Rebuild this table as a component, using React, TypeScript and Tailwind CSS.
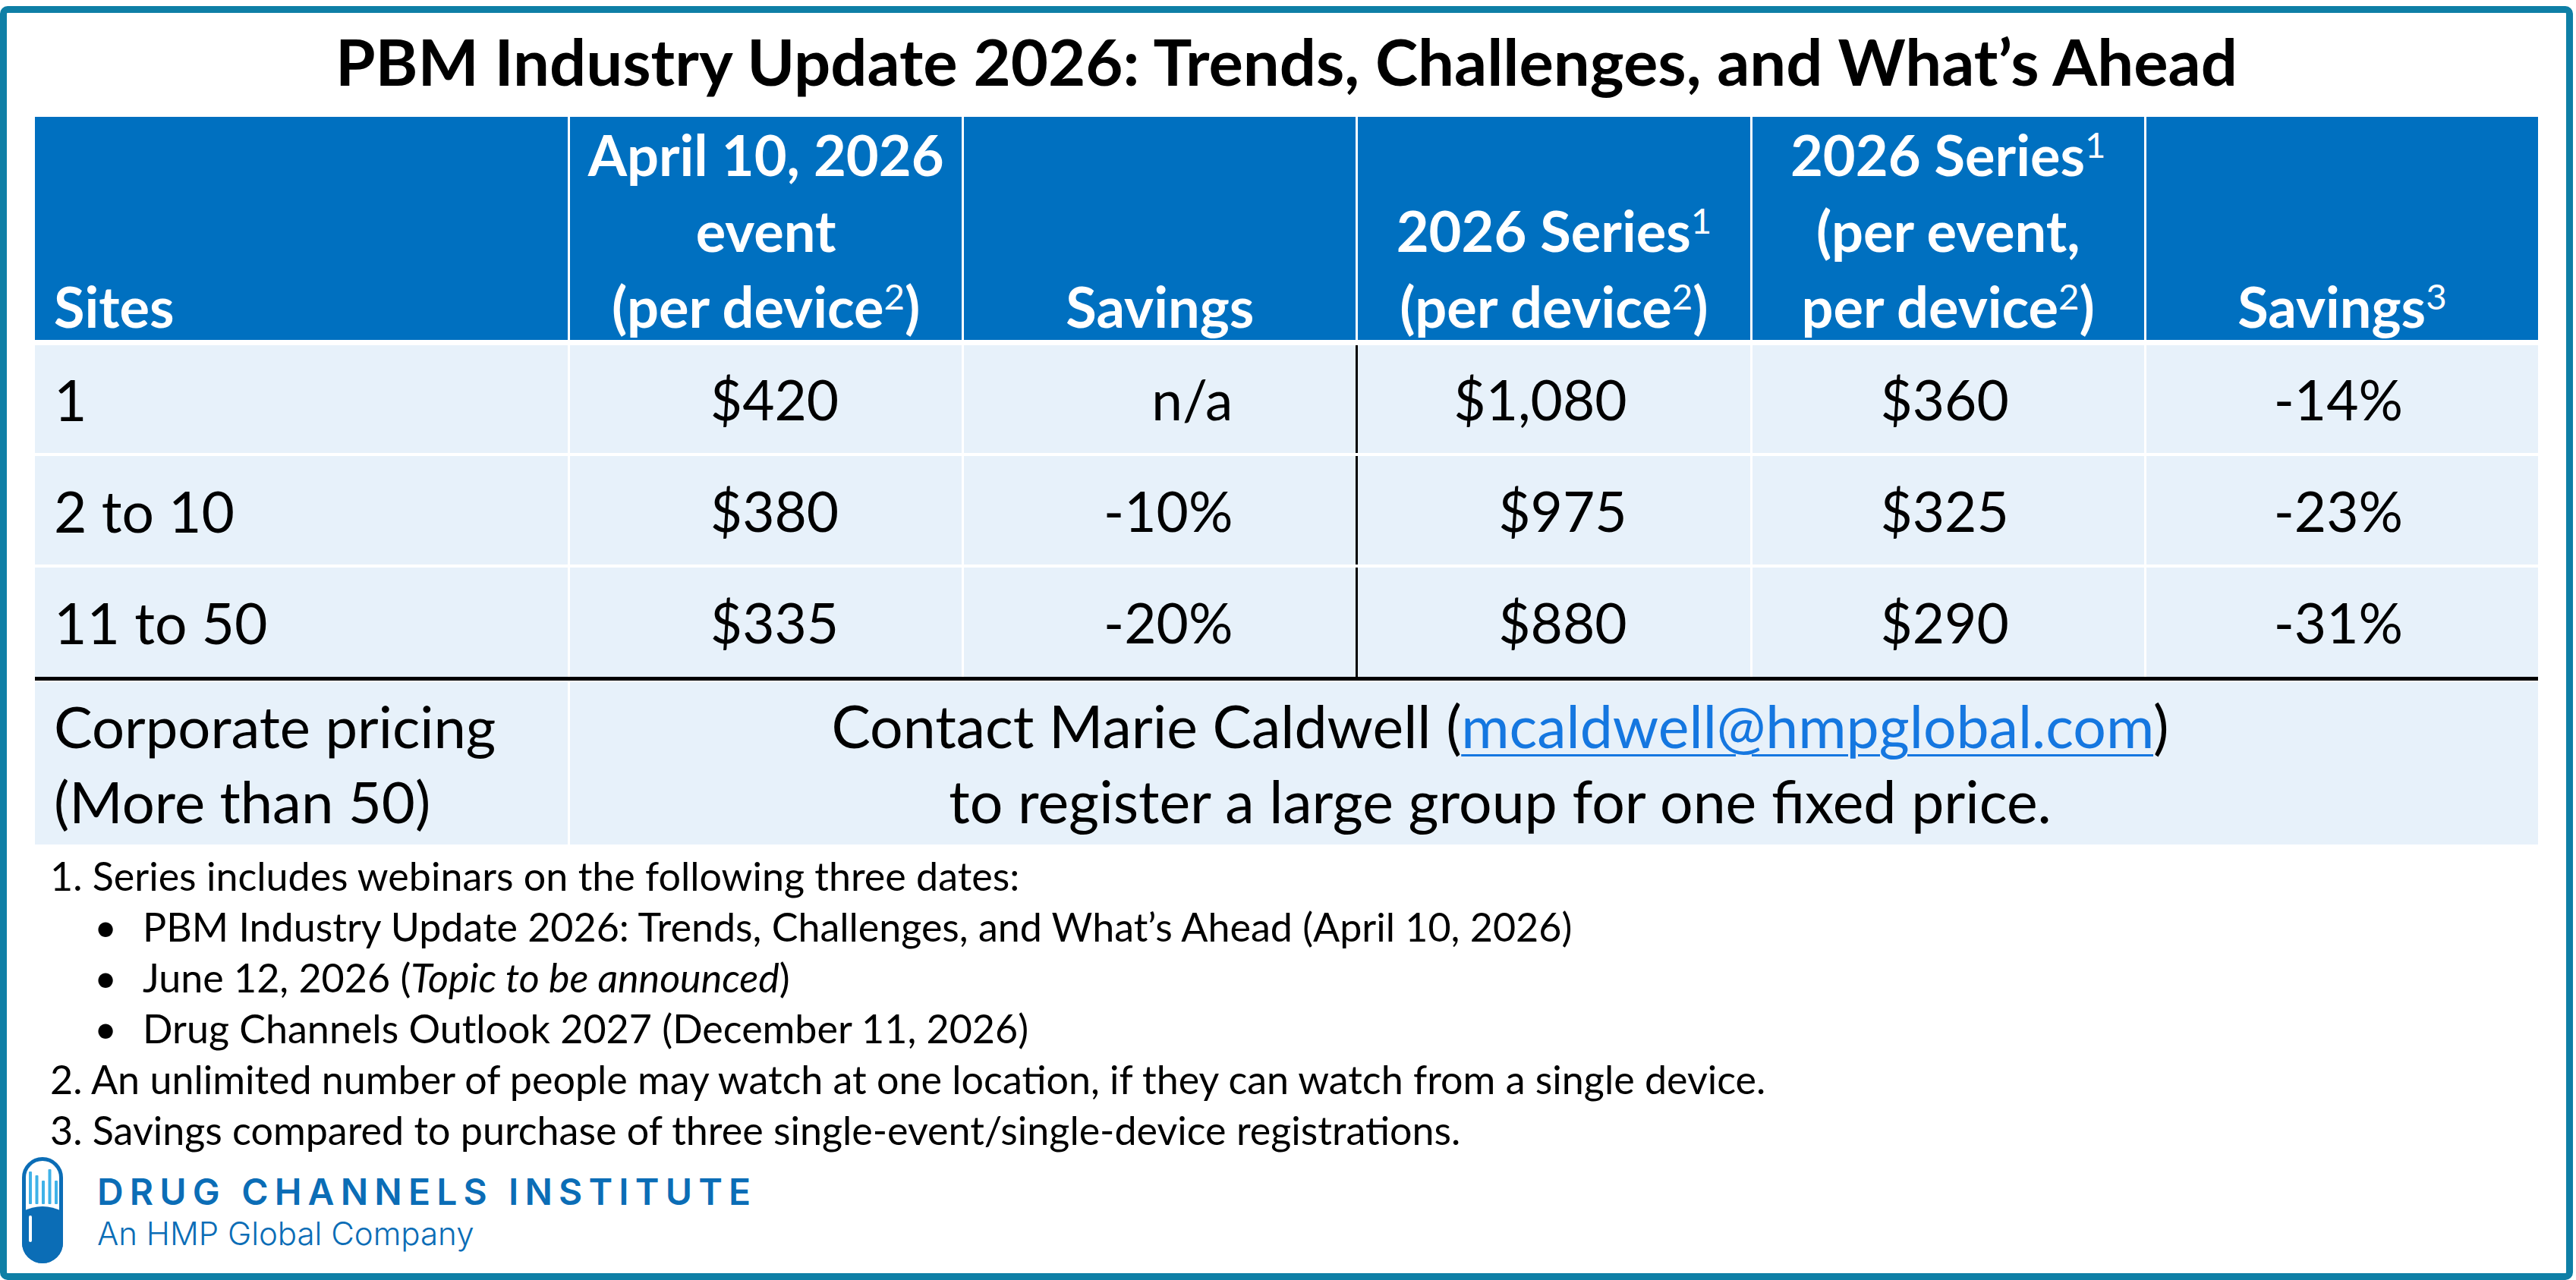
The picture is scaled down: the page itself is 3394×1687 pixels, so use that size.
import React from 'react'

type Row = { sites: string; event: string; eventSavings: string; series: string; perEvent: string; savings: string }

const ROWS: Row[] = [
  { sites: '1', event: '$420', eventSavings: 'n/a', series: '$1,080', perEvent: '$360', savings: '-14%' },
  { sites: '2 to 10', event: '$380', eventSavings: '-10%', series: '$975', perEvent: '$325', savings: '-23%' },
  { sites: '11 to 50', event: '$335', eventSavings: '-20%', series: '$880', perEvent: '$290', savings: '-31%' },
]

const ROW_HEIGHTS = ['h-[142px]', 'h-[143px] mt-[4px]', 'h-[144px] mt-[4px]']

function Sup({ children }: { children: React.ReactNode }) {
  return <sup className="text-[0.64em] font-normal">{children}</sup>
}

function HeaderCell({ children, left }: { children: React.ReactNode; left?: boolean }) {
  return (
    <div className={left ? 'flex items-end bg-[#0070c0] pl-[25px]' : 'flex items-end justify-center bg-[#0070c0]'}>
      <div className={left ? 'mb-[-6px] text-left' : 'mb-[-6px] text-center'}>{children}</div>
    </div>
  )
}

function Bullet({ children }: { children: React.ReactNode }) {
  return (
    <li className="flex">
      <span className="w-[122px] shrink-0 pl-[58px]">•</span>
      <span>{children}</span>
    </li>
  )
}

function PillLogo() {
  return (
    <svg width="54" height="140" viewBox="0 0 54 140" className="shrink-0">
      <defs>
        <clipPath id="pill">
          <rect x="0" y="0" width="54" height="140" rx="27" />
        </clipPath>
      </defs>
      <rect x="2.5" y="2.5" width="49" height="135" rx="24.5" fill="#fff" stroke="#0b6db6" strokeWidth="5" />
      <path d="M0 72 Q27 58 54 72 L54 140 L0 140 Z" fill="#0b6db6" clipPath="url(#pill)" />
      <rect x="9" y="19" width="4" height="43" rx="1" fill="#3fb2e8" />
      <rect x="17.5" y="24" width="4" height="38" rx="1" fill="#3fb2e8" />
      <rect x="26" y="31" width="4" height="31" rx="1" fill="#3fb2e8" />
      <rect x="34.5" y="16" width="4" height="46" rx="1" fill="#3fb2e8" />
      <rect x="43" y="31" width="4" height="31" rx="1" fill="#3fb2e8" />
      <rect x="9" y="77" width="4" height="35" rx="2" fill="#fff" />
    </svg>
  )
}

export default function App() {
  return (
    <div className="h-[1687px] w-[3394px] overflow-hidden bg-white pt-[8px] font-[Lato,sans-serif] text-black">
      <div className="h-[1679px] w-[3390px] rounded-[10px] border-[9px] border-[#0e7fa6]">
        <h1 className="h-[137px] pt-[15px] text-center text-[85px] font-bold leading-[97px]">
          PBM Industry Update 2026: Trends, Challenges, and What’s Ahead
        </h1>

        <div className="ml-[37px] w-[3298px]">
          <div className="grid h-[288px] grid-cols-[702px_repeat(5,1fr)] gap-x-[3px] text-[74px] font-bold leading-[100px] text-white">
            <HeaderCell left>Sites</HeaderCell>
            <HeaderCell>
              April 10, 2026
              <br />
              event
              <br />
              (per device<Sup>2</Sup>)
            </HeaderCell>
            <HeaderCell>Savings</HeaderCell>
            <HeaderCell>
              2026 Series<Sup>1</Sup>
              <br />
              (per device<Sup>2</Sup>)
            </HeaderCell>
            <HeaderCell>
              2026 Series<Sup>1</Sup>
              <br />
              (per event,
              <br />
              per device<Sup>2</Sup>)
            </HeaderCell>
            <HeaderCell>
              Savings<Sup>3</Sup>
            </HeaderCell>
          </div>

          <div className="mt-[13px] text-[73px] leading-[88px]">
            {ROWS.map((row, i) => (
              <div key={row.sites} className={`grid grid-cols-[702px_repeat(5,1fr)] gap-x-[3px] ${ROW_HEIGHTS[i]}`}>
                <div className="flex items-center bg-[#e7f1fa] pl-[25px] text-[75px]">{row.sites}</div>
                <div className="flex items-center justify-end bg-[#e7f1fa] pr-[162px]">{row.event}</div>
                <div className="flex items-center justify-end bg-[#e7f1fa] pr-[162px]">{row.eventSavings}</div>
                <div className="flex items-center justify-end bg-[#e7f1fa] pr-[162px] shadow-[-3px_0_0_0_#000]">
                  {row.series}
                </div>
                <div className="flex items-center justify-end bg-[#e7f1fa] pr-[178px]">{row.perEvent}</div>
                <div className="flex items-center justify-end bg-[#e7f1fa] pr-[178px]">{row.savings}</div>
              </div>
            ))}
            <div className="h-[5px] bg-black" />
            <div className="mt-[2px] grid h-[214px] grid-cols-[702px_1fr] gap-x-[3px] text-[76px] leading-[99px]">
              <div className="flex items-center bg-[#e7f1fa] pl-[25px]">
                <div>
                  Corporate pricing
                  <br />
                  (More than 50)
                </div>
              </div>
              <div className="flex items-center justify-center bg-[#e7f1fa] pr-[142px] text-[77px]">
                <div className="text-center">
                  Contact Marie Caldwell (
                  <a href="mailto:mcaldwell@hmpglobal.com" className="text-[#1577e0] underline decoration-[3px] underline-offset-[8px]">
                    mcaldwell@hmpglobal.com
                  </a>
                  )
                  <br />
                  to register a large group for one fixed price.
                </div>
              </div>
            </div>
          </div>
        </div>

        <div className="ml-[57px] mt-[8px] text-[52px] leading-[67px]">
          <p>1. Series includes webinars on the following three dates:</p>
          <ul>
            <Bullet>PBM Industry Update 2026: Trends, Challenges, and What’s Ahead (April 10, 2026)</Bullet>
            <Bullet>
              June 12, 2026 (<em>Topic to be announced</em>)
            </Bullet>
            <Bullet>Drug Channels Outlook 2027 (December 11, 2026)</Bullet>
          </ul>
          <p>2. An unlimited number of people may watch at one location, if they can watch from a single device.</p>
          <p>3. Savings compared to purchase of three single-event/single-device registrations.</p>
        </div>

        <div className="ml-[20px] mt-[2px] flex items-start gap-[45px]">
          <PillLogo />
          <div className="mt-[22px] font-[Inter,sans-serif] text-[#0b6db6]">
            <div className="text-[48px] font-semibold leading-[48px] tracking-[0.17em]">DRUG CHANNELS INSTITUTE</div>
            <div className="mt-[9px] text-[42px] font-light leading-[44px]">An HMP Global Company</div>
          </div>
        </div>
      </div>
    </div>
  )
}
